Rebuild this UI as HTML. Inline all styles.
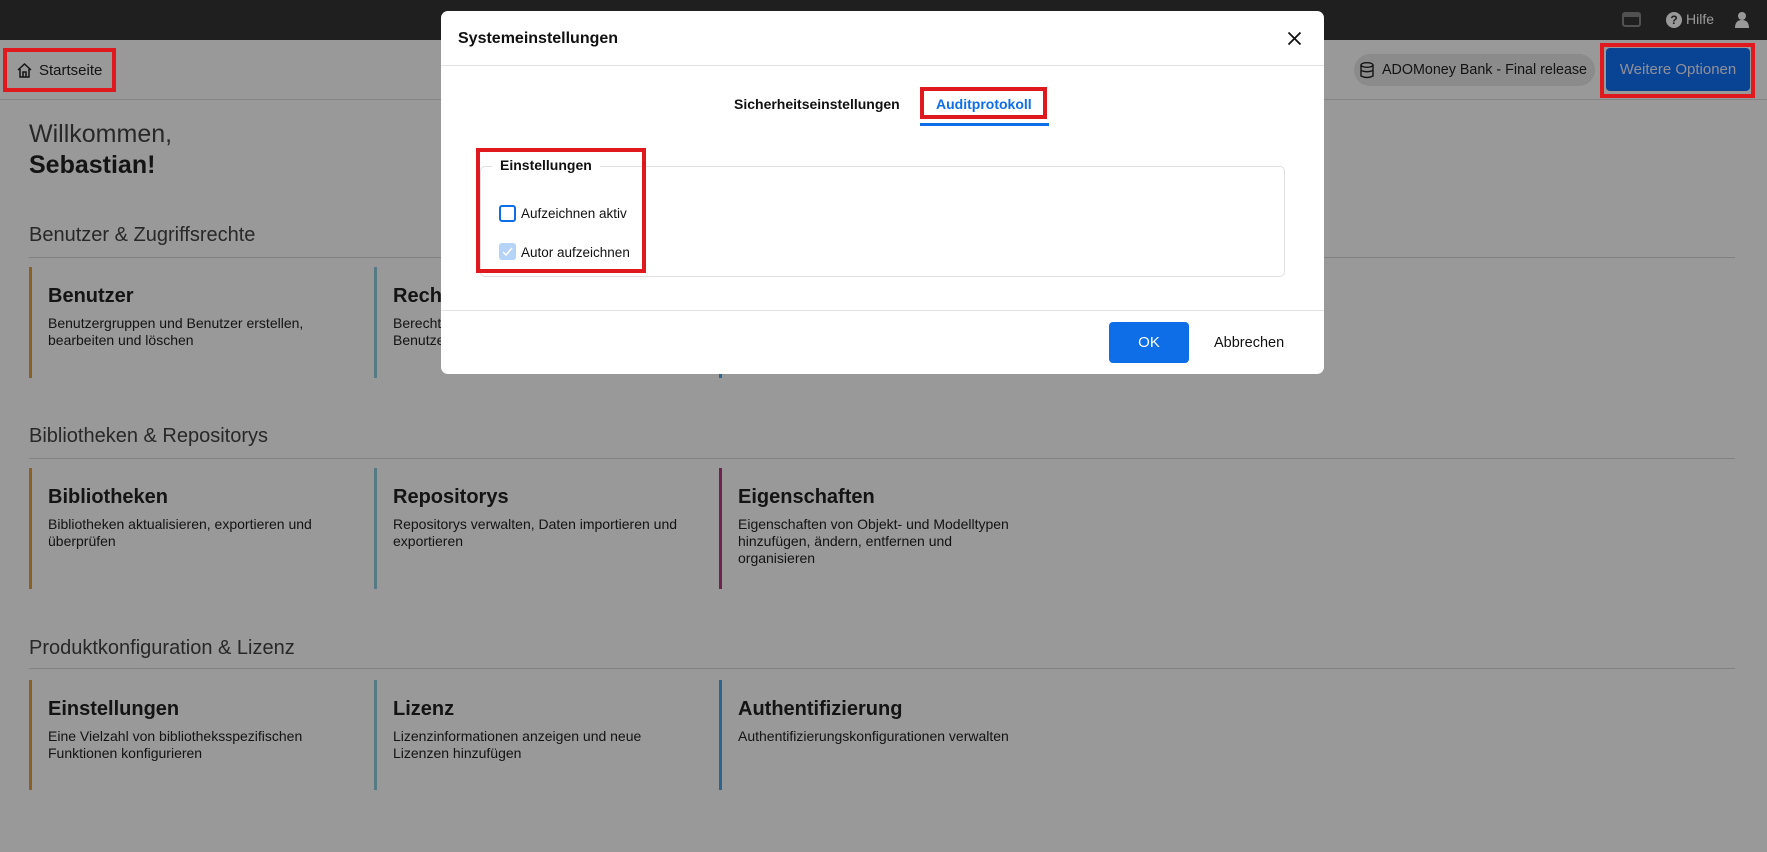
<!DOCTYPE html>
<html><head><meta charset="utf-8"><style>
*{box-sizing:border-box;margin:0;padding:0}
body{width:1767px;height:852px;overflow:hidden;font-family:"Liberation Sans",Arial,sans-serif;color:#222;position:relative;background:#fff}
.abs{position:absolute}
.top{left:0;top:0;width:1767px;height:40px;background:#343434}
.bar{left:0;top:40px;width:1767px;height:60px;border-bottom:1px solid #dcdcdc}
.red{position:absolute;border:4px solid #e0191e}
.sec{position:absolute;left:29px;font-size:20px;color:#444}
.line{position:absolute;left:29px;width:1706px;height:1px;background:#d8d8d8}
.card{position:absolute;width:330px;border-left:3px solid;padding-left:16px}
.card h3{font-size:20px;font-weight:bold;margin-top:18px;margin-bottom:7px;color:#222}
.card p{font-size:14px;line-height:17px;color:#222}
.ov{left:0;top:0;width:1767px;height:852px;background:rgba(0,0,0,0.4)}
.modal{left:441px;top:11px;width:883px;height:363px;background:#fff;border-radius:7px}
</style></head><body>
<div class="abs top"></div>
<svg class="abs" style="left:1622px;top:12px" width="19" height="15" viewBox="0 0 19 15"><rect x="1" y="1" width="17" height="13" rx="2" fill="none" stroke="#888" stroke-width="2"/><rect x="1" y="1" width="17" height="4" fill="#888"/></svg>
<div class="abs" style="left:1666px;top:12px;width:16px;height:16px;border-radius:50%;background:#fff;color:#343434;font-size:12px;font-weight:bold;text-align:center;line-height:16px">?</div>
<div class="abs" style="left:1686px;top:11px;font-size:14px;color:#fff">Hilfe</div>
<svg class="abs" style="left:1735px;top:11px" width="14" height="17" viewBox="0 0 14 17"><circle cx="7" cy="5" r="4" fill="#fff"/><path d="M0 17 Q0 9 7 9 Q14 9 14 17Z" fill="#fff"/></svg>
<div class="abs bar"></div>
<svg class="abs" style="left:16px;top:62px" width="17" height="16" viewBox="0 0 17 16"><path d="M2 8 L8.5 2 L15 8 M4 7 V15 H13 V7 M7 15 V10 H10 V15" fill="none" stroke="#222" stroke-width="1.5"/></svg>
<div class="abs" style="left:39px;top:62px;font-size:15px">Startseite</div>
<div class="abs" style="left:1354px;top:54px;width:241px;height:32px;border-radius:16px;background:#e8e8e8"></div>
<svg class="abs" style="left:1360px;top:62px" width="14" height="17" viewBox="0 0 14 17"><ellipse cx="7" cy="3" rx="6" ry="2.3" fill="none" stroke="#222" stroke-width="1.4"/><path d="M1 3V14Q7 17 13 14V3M1 8.5Q7 11 13 8.5" fill="none" stroke="#222" stroke-width="1.4"/></svg>
<div class="abs" style="left:1382px;top:62px;font-size:14.3px;white-space:nowrap">ADOMoney Bank - Final release</div>
<div class="abs" style="left:1606px;top:48px;width:144px;height:43px;border-radius:4px;background:#1070f5;color:#eef;font-size:15px;text-align:center;line-height:43px">Weitere Optionen</div>

<div class="abs" style="left:29px;top:120px;font-size:25px;color:#444">Willkommen,</div>
<div class="abs" style="left:29px;top:151px;font-size:25px;font-weight:bold;color:#222">Sebastian!</div>

<div class="sec" style="top:224px">Benutzer &amp; Zugriffsrechte</div>
<div class="line" style="top:257px"></div>
<div class="card" style="left:29px;top:267px;height:111px;border-color:#e8a040"><h3>Benutzer</h3><p>Benutzergruppen und Benutzer erstellen,<br>bearbeiten und löschen</p></div>
<div class="card" style="left:374px;top:267px;height:111px;border-color:#8fcbdc"><h3>Rechte</h3><p>Berechtigungen<br>Benutzer</p></div>
<div class="card" style="left:719px;top:267px;height:111px;border-color:#4aa8ee"><h3></h3></div>

<div class="sec" style="top:425px">Bibliotheken &amp; Repositorys</div>
<div class="line" style="top:458px"></div>
<div class="card" style="left:29px;top:468px;height:121px;border-color:#e8a040"><h3>Bibliotheken</h3><p>Bibliotheken aktualisieren, exportieren und<br>überprüfen</p></div>
<div class="card" style="left:374px;top:468px;height:121px;border-color:#8fcbdc"><h3>Repositorys</h3><p>Repositorys verwalten, Daten importieren und<br>exportieren</p></div>
<div class="card" style="left:719px;top:468px;height:121px;border-color:#b83a80"><h3>Eigenschaften</h3><p>Eigenschaften von Objekt- und Modelltypen<br>hinzufügen, ändern, entfernen und<br>organisieren</p></div>

<div class="sec" style="top:637px">Produktkonfiguration &amp; Lizenz</div>
<div class="line" style="top:668px"></div>
<div class="card" style="left:29px;top:680px;height:110px;border-color:#e8a040"><h3>Einstellungen</h3><p>Eine Vielzahl von bibliotheksspezifischen<br>Funktionen konfigurieren</p></div>
<div class="card" style="left:374px;top:680px;height:110px;border-color:#8fcbdc"><h3>Lizenz</h3><p>Lizenzinformationen anzeigen und neue<br>Lizenzen hinzufügen</p></div>
<div class="card" style="left:719px;top:680px;height:110px;border-color:#4aa8ee"><h3>Authentifizierung</h3><p>Authentifizierungskonfigurationen verwalten</p></div>

<div class="abs ov"></div>
<div class="red" style="left:3px;top:48px;width:113px;height:44px"></div>
<div class="red" style="left:1600px;top:43px;width:155px;height:55px"></div>

<div class="abs modal">
 <div class="abs" style="left:17px;top:19px;font-size:16px;font-weight:bold;color:#111">Systemeinstellungen</div>
 <svg class="abs" style="left:846px;top:20px" width="15" height="15" viewBox="0 0 15 15"><path d="M1.5 1.5L13.5 13.5M13.5 1.5L1.5 13.5" stroke="#111" stroke-width="1.8"/></svg>
 <div class="abs" style="left:0;top:54px;width:883px;height:1px;background:#e2e2e2"></div>
 <div class="abs" style="left:293px;top:85px;font-size:14px;font-weight:bold;color:#111">Sicherheitseinstellungen</div>
 <div class="abs" style="left:495px;top:85px;font-size:14px;font-weight:bold;color:#0d6ee8">Auditprotokoll</div>
 <div class="abs" style="left:479px;top:112px;width:129px;height:3px;background:#0d6ee8"></div>
 <div class="abs" style="left:39px;top:155px;width:805px;height:111px;border:1px solid #e0e0e0;border-radius:5px"></div>
 <div class="abs" style="left:51px;top:146px;padding:0 8px;background:#fff;font-size:14px;font-weight:bold;color:#111">Einstellungen</div>
 <div class="abs" style="left:58px;top:194px;width:17px;height:17px;border:2px solid #0d6ee8;border-radius:3px"></div>
 <div class="abs" style="left:80px;top:195px;font-size:13.5px;color:#111">Aufzeichnen aktiv</div>
 <div class="abs" style="left:58px;top:232px;width:17px;height:17px;background:#b5d2f7;border-radius:3px"></div>
 <svg class="abs" style="left:60px;top:234px" width="13" height="13" viewBox="0 0 13 13"><path d="M2 7L5 10L11 3" fill="none" stroke="#fff" stroke-width="1.5"/></svg>
 <div class="abs" style="left:80px;top:234px;font-size:13.5px;color:#111">Autor aufzeichnen</div>
 <div class="abs" style="left:0;top:299px;width:883px;height:1px;background:#e2e2e2"></div>
 <div class="abs" style="left:668px;top:311px;width:80px;height:41px;background:#0d6ee8;border-radius:4px;color:#fff;font-size:15px;text-align:center;line-height:41px">OK</div>
 <div class="abs" style="left:773px;top:324px;font-size:14.5px;color:#111">Abbrechen</div>
</div>
<div class="red" style="left:920px;top:87px;width:127px;height:32px"></div>
<div class="red" style="left:476px;top:148px;width:170px;height:125px"></div>
</body></html>
